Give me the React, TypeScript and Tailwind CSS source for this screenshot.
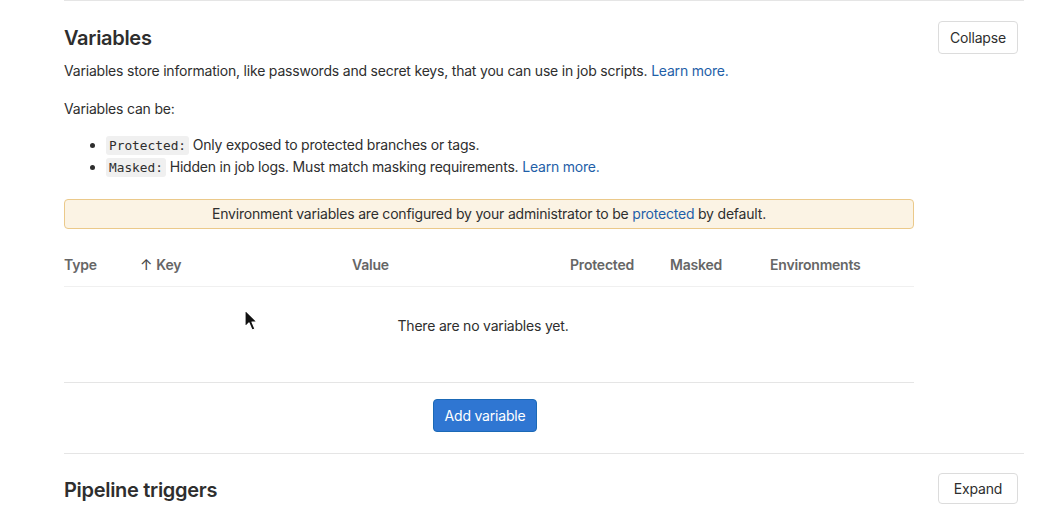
import React from 'react'

const font = { fontFamily: 'Inter, "Noto Sans", sans-serif' }

const Code = ({ children }: { children: React.ReactNode }) => (
  <code className="rounded-[3px] bg-[#f0f0f0] px-[3px] py-[2px] font-['DejaVu_Sans_Mono',monospace] text-[12.8px] leading-none tracking-normal text-[#2e2e2e]">
    {children}
  </code>
)

const Cursor = () => (
  <svg className="absolute left-[244px] top-[309px]" width="16" height="24" viewBox="0 0 16 24">
    <path d="M1 1 L1 18 L5 14 L8 21 L11 20 L8 13 L13 13 Z" fill="#111" stroke="#fff" strokeWidth="1.2" strokeLinejoin="round" />
  </svg>
)

export default function App() {
  return (
    <div className="relative min-h-[506px] w-[1039px] overflow-hidden bg-white text-[#2e2e2e]" style={font}>
      <div className="ml-[64px] w-[960px]">
        <section className="border-t border-[#e5e5e5] pt-[20px]">
          <div className="flex items-start justify-between">
            <h2 className="pt-[5px] text-[20px] font-semibold leading-[24px] tracking-[-0.3px] text-[#2e2e2e]">Variables</h2>
            <button className="mr-[6px] h-[33px] w-[80px] rounded-[4px] border border-[#dcdcdc] bg-white text-[14px] tracking-[-0.2px] text-[#2e2e2e]">
              Collapse
            </button>
          </div>
          <div className="tracking-[-0.2px]">
            <p className="mt-[-25px] pt-[32px] text-[14px] leading-[20px]">
              Variables store information, like passwords and secret keys, that you can use in job scripts.{' '}
              <a className="text-[#1f5fa8]">Learn more.</a>
            </p>
            <p className="mt-[18px] text-[14px] leading-[20px]">Variables can be:</p>
            <ul className="mt-[15px] list-disc pl-[42px] text-[14px] leading-[22px]">
              <li>
                <Code>Protected:</Code> Only exposed to protected branches or tags.
              </li>
              <li>
                <Code>Masked:</Code> Hidden in job logs. Must match masking requirements.{' '}
                <a className="text-[#1f5fa8]">Learn more.</a>
              </li>
            </ul>
            <div className="mt-[21px] w-[850px] rounded-[4px] border border-[#ebc98a] bg-[#fbf3e4] py-[5px] text-center text-[14px] leading-[18px]">
              Environment variables are configured by your administrator to be{' '}
              <a className="text-[#1f5fa8]">protected</a> by default.
            </div>
            <div className="w-[850px]">
              <div className="mt-[26px] grid grid-cols-[76px_212px_218px_100px_100px_1fr] border-b border-[#f0f0f0] pb-[11px] text-[14px] font-semibold leading-[20px] text-[#666]">
                <div>Type</div>
                <div className="flex items-center gap-[4px]">
                  <span className="text-[15px] font-normal text-[#444]">↑</span>Key
                </div>
                <div>Value</div>
                <div>Protected</div>
                <div>Masked</div>
                <div>Environments</div>
              </div>
              <div className="flex h-[95px] items-start justify-center pr-[12px] pt-[29px] text-[14px] leading-[20px] text-[#2e2e2e]">
                There are no variables yet.
              </div>
              <div className="flex justify-center border-t border-[#e5e5e5] pb-[21px] pr-[8px] pt-[16px]">
                <button className="h-[33px] w-[104px] rounded-[4px] border border-[#1b69b6] bg-[#2f76d2] text-[14px] text-white">
                  Add variable
                </button>
              </div>
            </div>
          </div>
        </section>
        <section className="flex items-start justify-between border-t border-[#e5e5e5] pt-[19px]">
          <h2 className="pt-[5px] text-[20px] font-semibold leading-[24px] tracking-[-0.3px]">Pipeline triggers</h2>
          <button className="mr-[6px] h-[31px] w-[80px] rounded-[4px] border border-[#dcdcdc] bg-white text-[14px] tracking-[-0.2px] text-[#2e2e2e]">
            Expand
          </button>
        </section>
      </div>
      <Cursor />
    </div>
  )
}
